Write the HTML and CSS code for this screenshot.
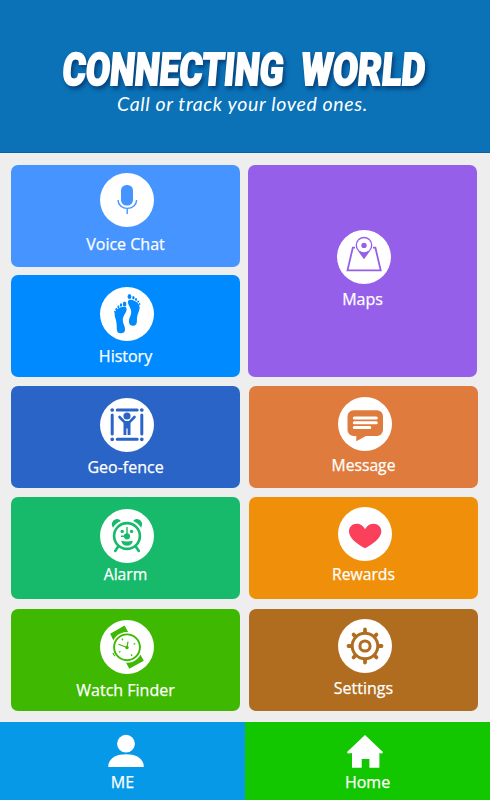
FILE: index.html
```
<!DOCTYPE html>
<html lang="en">
<head>
  <meta charset="UTF-8">
  <meta name="viewport" content="width=device-width, initial-scale=1.0">
  <title>Connecting World</title>
  <link rel="stylesheet" href="styles.css">
</head>
<body>
  <header class="header">
    <svg class="title" width="490" height="60" viewBox="0 0 490 60">
      <g transform="translate(0 50) skewX(-5)">
        <text x="61.5" y="0" textLength="221" lengthAdjust="spacingAndGlyphs">CONNECTING</text>
        <text x="300" y="0" textLength="124" lengthAdjust="spacingAndGlyphs">WORLD</text>
      </g>
    </svg>
    <p class="tagline">Call or track your loved ones.</p>
  </header>

  <main class="menu">
    <a class="card voice">
      <svg class="icon" viewBox="0 0 54 54">
        <rect x="21" y="12" width="12" height="20.6" rx="5.5" fill="currentColor"/>
        <path d="M18 27a9.2 8.3 0 0 0 18.6 0M27.2 35.5v5.5" fill="none" stroke="currentColor" stroke-width="1.4"/>
      </svg>
      <span class="label">Voice Chat</span>
    </a>

    <a class="card maps">
      <svg class="icon" viewBox="0 0 54 54">
        <path d="M18 17.7h-2.2L10.5 40.3h33.2L38.4 17.7H36" fill="none" stroke="currentColor" stroke-width="1.8"/>
        <path d="M27 29.3l-7-9.700a8.300 8.300 0 1 1 14 0z" fill="currentColor"/>
        <circle cx="27" cy="15.2" r="7" fill="#fff"/>
        <circle cx="27" cy="15.4" r="2.7" fill="currentColor"/>
      </svg>
      <span class="label">Maps</span>
    </a>

    <a class="card history">
      <svg class="icon" viewBox="0 0 54 54" fill="currentColor">
        <path d="M24.8 19.8c2.4.6 2.1 3.4 1 5.5c-1.5 2.9-3.5 5.2-3 8.7c.4 3.3 2.5 5.500 2.200 9c-.2 2.500-2 3.400-4.200 3.300c-3 0-4-1.500-4-4.300c0-4.500-.3-7.500-1.500-11c-1.300-3.800-.6-7.500 2.700-9.500c2-1.200 4.600-2.200 6.800-1.700z"/>
        <ellipse cx="24.6" cy="17" rx="1.8" ry="2.5"/>
        <ellipse cx="21" cy="18" rx="1.2" ry="1.7"/>
        <ellipse cx="18.4" cy="19.9" rx="1" ry="1.4"/>
        <ellipse cx="16.3" cy="22.2" rx=".9" ry="1.2"/>
        <ellipse cx="14.8" cy="24.7" rx=".8" ry="1"/>
        <path d="M29.600 12.800c-2.200.6-1.800 3.400-.8 5.400c1.500 2.800 2.900 4.900 2.300 8.200c-.5 3-2.300 4.800-2.200 8c.1 2.700 1.600 4.300 4.100 4.300c2.800 0 3.900-1.800 3.900-4.500c0-4.200.5-6.500 1.900-9.700c1.600-3.800 1-7-2.200-9.400c-2-1.600-4.700-2.900-7-2.300z"/>
        <ellipse cx="29.5" cy="9.5" rx="1.9" ry="2.6"/>
        <ellipse cx="33.4" cy="10.7" rx="1.2" ry="1.7"/>
        <ellipse cx="36" cy="12.5" rx="1" ry="1.4"/>
        <ellipse cx="38.1" cy="14.6" rx=".9" ry="1.2"/>
        <ellipse cx="39.6" cy="17" rx=".8" ry="1"/>
      </svg>
      <span class="label">History</span>
    </a>

    <a class="card fence">
      <svg class="icon" viewBox="0 0 54 54" fill="none" stroke="currentColor" stroke-width="3" stroke-linecap="round">
        <path d="M17.2 12h20M17.2 41.3h20M12.2 17v19M41.8 17v19"/>
        <path stroke-width="3.7" d="M12.2 12h0M41.8 12h0M12.2 41.3h0M41.8 41.3h0"/>
        <circle cx="27" cy="18" r="3.6" fill="currentColor" stroke="none"/>
        <path stroke-width="2.6" d="M19.5 19l5 5.200M34.500 19l-5 5.200"/>
        <path d="M23.500 23h7v14h-2.900v-6.500h-1.200V37h-2.900z" fill="currentColor" stroke="none"/>
      </svg>
      <span class="label">Geo-fence</span>
    </a>

    <a class="card message">
      <svg class="icon" viewBox="0 0 54 54">
        <path d="M15.5 13.2h23.500a6 6 0 0 1 6 6v13.800a6 6 0 0 1-6 6H28l-9.700 5.300V39h-2.800a6 6 0 0 1-6-6V19.200a6 6 0 0 1 6-6z" fill="currentColor"/>
        <path d="M16.3 21h22M16.3 25.7h22M16.3 30.4h15.500" stroke="#fff" stroke-width="3" stroke-linecap="round"/>
      </svg>
      <span class="label">Message</span>
    </a>

    <a class="card alarm">
      <svg class="icon" viewBox="0 0 54 54" fill="currentColor">
        <circle cx="27" cy="27" r="12.9" fill="none" stroke="currentColor" stroke-width="2.6"/>
        <path d="M13 18.700c-3-4.500.5-8.700 4.200-8.700c1.500 0 2.700.7 3.600 2q-5 2-7.800 6.700zM41 18.700c3-4.500-.5-8.700-4.200-8.700c-1.500 0-2.700.7-3.600 2q5 2 7.800 6.700z"/>
        <path d="M17.900 38l-2.700 4M36.100 38l2.700 4" stroke="currentColor" stroke-width="2.6" stroke-linecap="round"/>
        <circle cx="22.2" cy="22.4" r="1.7"/>
        <circle cx="31.6" cy="22.4" r="1.7"/>
        <circle cx="27" cy="27.3" r="3.1"/>
        <path d="M27 18v9.300h-6" fill="none" stroke="currentColor" stroke-width="1.4"/>
        <path d="M21.200 31.700q5.800 1.400 11.600 0q-1 5-5.800 5t-5.800-5z"/>
      </svg>
      <span class="label">Alarm</span>
    </a>

    <a class="card rewards">
      <svg class="icon" viewBox="0 0 54 54">
        <path d="M27 22.200c2.300-4 5-5.500 8.500-5.500c4.500 0 7.800 3.200 7.800 7.600c0 6.500-7.500 12.200-16.300 17c-8.800-4.800-16-10.500-16-17c0-4.400 3.200-7.600 7.600-7.600c3.500 0 6.100 1.500 8.400 5.500z" fill="#fb405c"/>
      </svg>
      <span class="label">Rewards</span>
    </a>

    <a class="card watch">
      <svg class="icon" viewBox="0 0 54 54">
        <path d="M10.200 13.700L24.600 5.600l4 7.500L13.600 21zM25.800 42.200l3.500 6.500l14.500-8l-4.100-7.200z" fill="currentColor"/>
        <circle cx="27" cy="27.300" r="15.400" fill="#fff"/>
        <circle cx="27" cy="27.300" r="12.900" fill="none" stroke="currentColor" stroke-width="1.900"/>
        <path d="M18.500 24.300l8.500 3.200l1-6M22 18.500l.9 1.700M35.300 23.500l-1.700.8M32 36l-.9-1.700M18.800 32.300l1.700-.8M13 32.800q.6 2 2 3.300" fill="none" stroke="currentColor" stroke-width="1.2"/>
        <circle cx="27" cy="27.500" r="1.700" fill="currentColor"/>
      </svg>
      <span class="label">Watch Finder</span>
    </a>

    <a class="card settings">
      <svg class="icon" viewBox="0 0 54 54" fill="none" stroke="currentColor" stroke-width="3">
        <circle cx="27" cy="27" r="12.8"/>
        <circle cx="27" cy="27" r="5.1"/>
        <path stroke-width="3.800" stroke-linecap="round" d="M27 13v-2.500M27 41v2.500M13 27h-2.500M41 27h2.500M17.100 17.100l-1.500-1.500M36.900 17.100l1.500-1.500M17.100 36.900l-1.500 1.500M36.900 36.900l1.500 1.500"/>
      </svg>
      <span class="label">Settings</span>
    </a>
  </main>

  <nav class="tabs">
    <a class="tab me">
      <svg class="tab-icon" viewBox="0 0 36 34" fill="#fff">
        <circle cx="18" cy="9.700" r="8.900"/>
        <path d="M.3 33v-2C1.500 23.500 9 20.200 18 20.200S34.500 23.500 35.700 31v2z"/>
      </svg>
      <span class="label">ME</span>
    </a>
    <a class="tab home">
      <svg class="tab-icon" viewBox="0 0 36 34" fill="#fff">
        <path d="M18 1L35.700 17.800q.5 1.700-1.500 1.700L32.400 19v14.700h-10V25h-7.700v8.700H5V19l-3.200.5Q-.2 19.500.3 17.800z"/>
      </svg>
      <span class="label">Home</span>
    </a>
  </nav>
</body>
</html>
```
FILE: styles.css
```
* {
  box-sizing: border-box;
}
body {
  margin: 0;
  width: 490px;
  height: 800px;
  overflow: hidden;
  background-color: #eee;
  color: #fff;
  font-family: "Open Sans", "Noto Sans", sans-serif;
}

/* header */
.header {
  height: 153px;
  padding-top: 35px;
  background-color: #0b72b7;
  border-bottom: 1px solid #0562a5;
}
.title {
  display: block;
  overflow: visible;
  fill: #fff;
  stroke: #fff;
  stroke-width: 1.8px;
  font-family: Roboto, "Liberation Sans", sans-serif;
  font-size: 45px;
  font-weight: 900;
  filter: drop-shadow(2px 3px 2px rgba(0, 30, 80, 0.6));
}
.tagline {
  margin: -4px 0 0 -5px;
  line-height: 26px;
  text-align: center;
  font-family: Lato, sans-serif;
  font-size: 19.5px;
  font-style: italic;
  letter-spacing: 0.65px;
}

/* cards */
.menu {
  display: grid;
  grid-template-columns: 229px 229px;
  grid-template-rows: 110px 111px 111px 112px 101px;
  column-gap: 9px;
  align-items: start;
  height: 569px;
  padding: 12px 0 0 11px;
}
.card {
  display: flex;
  flex-direction: column;
  align-items: center;
  height: 102px;
  border-radius: 7px;
}
.icon {
  width: 54px;
  height: 54px;
  margin-left: 3px;
  border-radius: 50%;
  background-color: #fff;
}
.label {
  margin-top: 5px;
  font-size: 16px;
  line-height: 20px;
  white-space: nowrap;
  -webkit-text-stroke: 0.25px #fff;
}
.voice {
  padding-top: 8px;
  background-color: #4694ff;
  color: #4694ff;
}
.maps {
  grid-row: span 2;
  height: 212px;
  margin: 0 1px 0 -1px;
  padding-top: 65px;
  background-color: #965fe9;
  color: #965fe9;
}
.history {
  padding-top: 12px;
  background-color: #008aff;
  color: #008aff;
}
.fence {
  padding-top: 12px;
  background-color: #2a64c6;
  color: #2a64c6;
}
.message {
  padding-top: 11px;
  background-color: #e07b3e;
  color: #e07b3e;
}
.alarm {
  padding-top: 12px;
  background-color: #17b96b;
  color: #17b96b;
}
.rewards {
  padding-top: 10px;
  background-color: #f0900a;
  color: #f0900a;
}
.watch {
  padding-top: 11px;
  background-color: #3eb800;
  color: #3eb800;
}
.settings {
  padding-top: 10px;
  background-color: #b06d20;
  color: #b06d20;
}
.card .label,
.tab .label {
  color: #fff;
}
.message .icon,
.settings .icon {
  margin-left: 2px;
}
.voice .label {
  margin-top: 7px;
}
.watch .label {
  margin-top: 6px;
}
.message .label {
  margin-top: 4px;
}
.rewards .label {
  margin-top: 3px;
}
.alarm .label {
  margin-top: 1px;
}
.alarm .label,
.rewards .label,
.message .label {
  font-size: 15.7px;
}

/* bottom tabs */
.tabs {
  display: flex;
  height: 78px;
}
.tab {
  display: flex;
  flex: 1;
  flex-direction: column;
  align-items: center;
  padding-top: 12px;
}
.tab-icon {
  width: 36px;
  height: 34px;
}
.tab .label {
  margin-top: 4px;
}
.me {
  background-color: #0599e7;
}
.me .tab-icon {
  margin-left: 7px;
}
.home {
  background-color: #12c700;
}
.home .tab-icon {
  margin-right: 5px;
}
```
